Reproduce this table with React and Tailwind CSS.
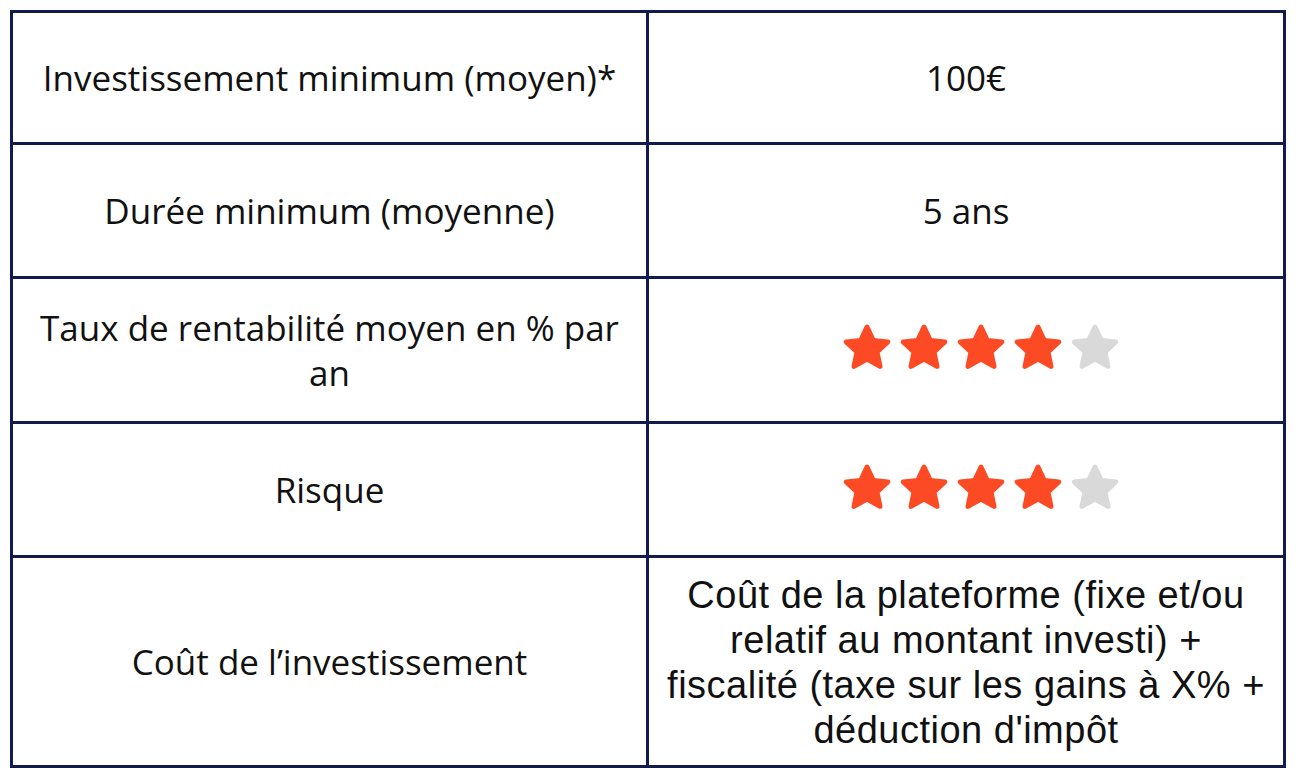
const rows = [
  { label: ["Investissement minimum (moyen)*"], value: ["100€"], h: "h-[132px]" },
  { label: ["Durée minimum (moyenne)"], value: ["5 ans"], h: "h-[134px]" },
  { label: ["Taux de rentabilité moyen en % par", "an"], stars: 4, h: "h-[145px]" },
  { label: ["Risque"], stars: 4, h: "h-[134px]" },
  {
    label: ["Coût de l’investissement"],
    long: [
      "Coût de la plateforme (fixe et/ou",
      "relatif au montant investi) +",
      "fiscalité (taxe sur les gains à X% +",
      "déduction d'impôt",
    ],
    h: "h-[207px]",
  },
];

function Star({ on }) {
  return (
    <svg width="50" height="48" viewBox="0 0 50 48">
      <polygon
        points="25,4 31.2,17.4 45.8,19 35,29 38,43.4 25,36 12,43.4 15,29 4.2,19 18.8,17.4"
        fill={on ? "#fc4a25" : "#d9d9d9"}
        stroke={on ? "#fc4a25" : "#d9d9d9"}
        strokeWidth="5"
        strokeLinejoin="round"
      />
    </svg>
  );
}

function Lines({ lines }) {
  return (
    <div className="whitespace-nowrap">
      {lines.map((l, i) => (
        <div key={i}>{l}</div>
      ))}
    </div>
  );
}

export default function App() {
  return (
    <div className="min-h-screen bg-white pt-[10px] pl-[10px]">
      <div
        className="w-[1276px] border-[3px] border-[#111b4d] text-[#111] text-[35px] leading-[45px]"
        style={{ fontFamily: '"Open Sans", sans-serif' }}
      >
        {rows.map((row, i) => (
          <div
            key={i}
            className={`grid grid-cols-[636px_1fr] ${row.h} ${i < rows.length - 1 ? "border-b-[3px] border-[#111b4d]" : ""}`}
          >
            {/* left */}
            <div className="border-r-[3px] border-[#111b4d] flex items-center justify-center text-center">
              <Lines lines={row.label} />
            </div>

            {/* right */}
            <div className="flex items-center justify-center text-center">
              {row.stars ? (
                <div className="flex gap-[7px] pl-[30px] pb-[6px]">
                  {[0, 1, 2, 3, 4].map((s) => (
                    <Star key={s} on={s < row.stars} />
                  ))}
                </div>
              ) : row.long ? (
                <div className="text-[38px] leading-[45px] tracking-[0.5px] font-['Liberation_Sans',sans-serif] pt-[2px]">
                  <Lines lines={row.long} />
                </div>
              ) : (
                <Lines lines={row.value} />
              )}
            </div>
          </div>
        ))}
      </div>
    </div>
  );
}
